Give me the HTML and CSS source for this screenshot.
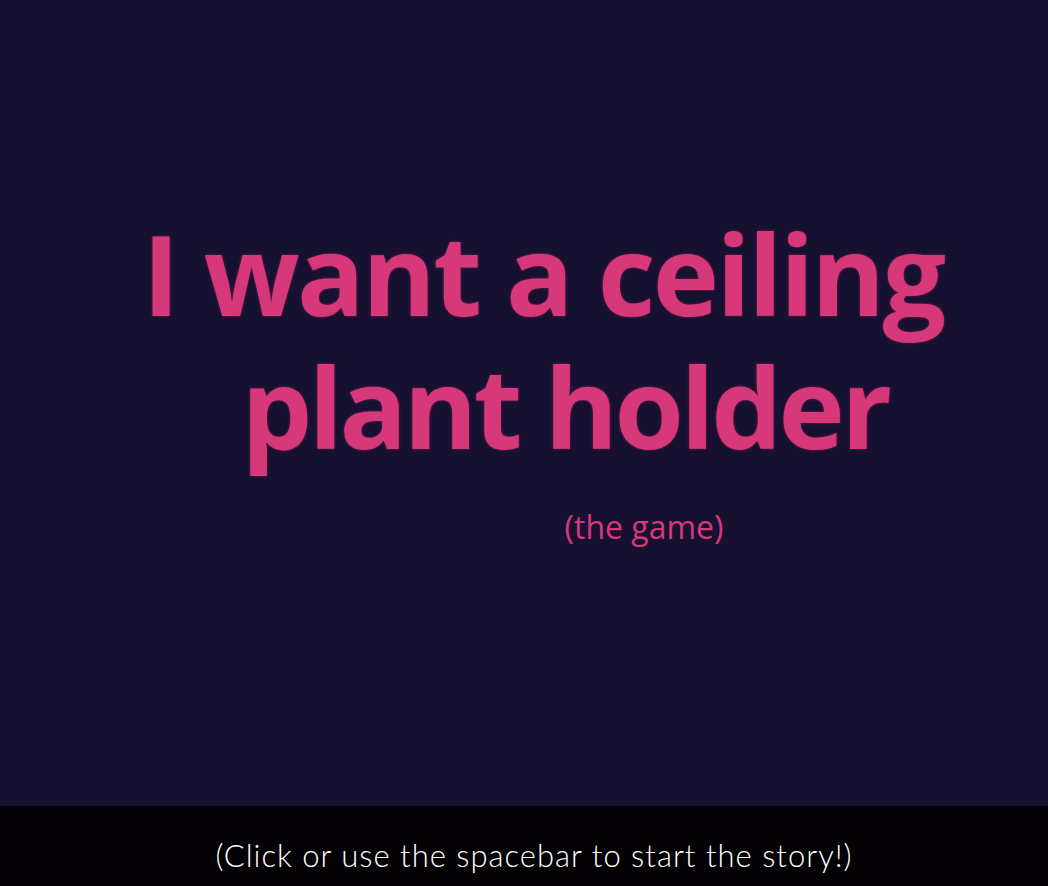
FILE: index.html
```html
<!DOCTYPE html>
<html lang="en">
<head>
<meta charset="utf-8">
<title>I want a ceiling plant holder</title>
<link rel="stylesheet" href="styles.css">
</head>
<body>
<main class="stage">
  <h1 class="title"><span class="line1">I want a ceiling</span><span class="line2">plant holder</span></h1>
  <p class="subtitle">(the game)</p>
</main>
<footer class="prompt">(Click or use the spacebar to start the story!)</footer>
</body>
</html>
```

FILE: styles.css
```css
html, body {
  margin: 0;
  padding: 0;
  height: 100%;
}
body {
  background: #161131;
  display: flex;
  flex-direction: column;
  overflow: hidden;
}
.stage {
  height: 806px;
  flex: none;
  display: flex;
  flex-direction: column;
  align-items: center;
  padding-top: 206px;
  box-sizing: border-box;
}
.title {
  margin: 0;
  font-family: "Open Sans", "Noto Sans", sans-serif;
  font-weight: 700;
  font-size: 112px;
  line-height: 133px;
  color: #d6387a;
  text-shadow: 0 0 3px #5c1d48, 0 0 2px #5c1d48;
  letter-spacing: -2.5px;
  display: flex;
  flex-direction: column;
  align-items: center;
}
.line1 { padding-left: 38px; }
.line2 { padding-left: 82px; letter-spacing: -3.5px; }
.subtitle {
  margin: 33px 0 0 0;
  padding-left: 240px;
  font-family: "Open Sans", "Noto Sans", sans-serif;
  font-size: 32px;
  color: #d6387a;
}
.prompt {
  height: 80px;
  flex: none;
  background: #030104;
  color: #ffffff;
  font-family: "Lato", sans-serif;
  font-weight: 300;
  font-size: 31px;
  letter-spacing: 1px;
  display: flex;
  align-items: center;
  justify-content: center;
  padding-left: 20px;
  padding-top: 18px;
  box-sizing: border-box;
}
```
